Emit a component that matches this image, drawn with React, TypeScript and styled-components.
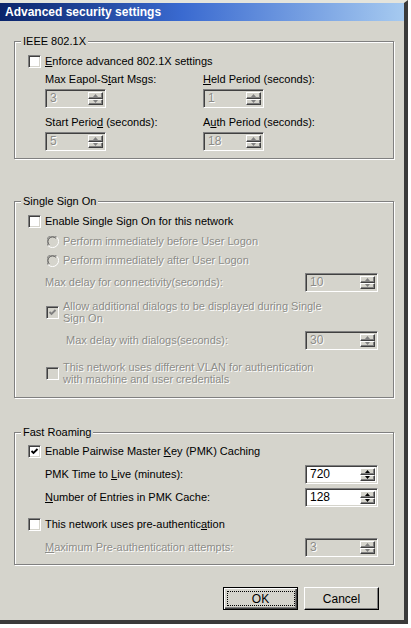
import React from 'react';
import styled, { createGlobalStyle } from 'styled-components';

const FACE = '#d5d4cc';
const SHADOW = '#808080';
const DARK = '#404040';
const GRAYTEXT = '#8c8c88';

const GlobalStyle = createGlobalStyle`
  html, body {
    margin: 0;
    padding: 0;
    background: #ffffff;
  }
  body {
    font-family: "Liberation Sans", Arial, sans-serif;
    font-size: 11px;
    color: #000;
  }
`;

function Check({ checked = false, disabled = false }: { checked?: boolean; disabled?: boolean }) {
  return (
    <CheckBox $disabled={disabled}>
      {checked && (
        <svg width="9" height="9" viewBox="0 0 9 9">
          <polyline
            points="1.5,4 3.5,6 7.5,2"
            fill="none"
            stroke={disabled ? SHADOW : '#000'}
            strokeWidth="1.8"
          />
        </svg>
      )}
    </CheckBox>
  );
}

function Radio() {
  return (
    <RadioDot width="12" height="12" viewBox="0 0 12 12">
      <circle cx="6" cy="6" r="5.5" fill={FACE} />
      <path d="M1.2 9.8 A5.4 5.4 0 0 1 9.8 1.2" fill="none" stroke={SHADOW} strokeWidth="1" />
      <path d="M2.2 8.8 A4.2 4.2 0 0 1 8.8 2.2" fill="none" stroke={DARK} strokeWidth="1" />
      <path d="M9.8 1.2 A5.4 5.4 0 0 1 1.2 9.8" fill="none" stroke="#fff" strokeWidth="1" />
    </RadioDot>
  );
}

function Spin({ value, width, disabled = false }: { value: string; width: number; disabled?: boolean }) {
  const arrow = disabled ? SHADOW : '#000';
  return (
    <SpinBox $w={width} $disabled={disabled}>
      <SpinValue $disabled={disabled}>{value}</SpinValue>
      <SpinButtons>
        <SpinHalf>
          <svg width="5" height="3" viewBox="0 0 5 3">
            <polygon points="2.5,0 5,3 0,3" fill={arrow} />
          </svg>
        </SpinHalf>
        <SpinHalf>
          <svg width="5" height="3" viewBox="0 0 5 3">
            <polygon points="0,0 5,0 2.5,3" fill={arrow} />
          </svg>
        </SpinHalf>
      </SpinButtons>
    </SpinBox>
  );
}

export default function App() {
  return (
    <>
      <GlobalStyle />
      <Window>
        <TitleBar>Advanced security settings</TitleBar>
        <Body>
          <Group $top={14}>
            <Legend>IEEE 802.1X</Legend>
            <Inner $pt={7} $pb={7}>
              <Row $mt={0}>
                <Check />
                <Text><u>E</u>nforce advanced 802.1X settings</Text>
              </Row>
              <FieldGrid>
                <Field>
                  <Text>Max Eapol-S<u>t</u>art Msgs:</Text>
                  <Spin value="3" width={61} disabled />
                </Field>
                <Field>
                  <Text><u>H</u>eld Period (seconds):</Text>
                  <Spin value="1" width={61} disabled />
                </Field>
                <Field>
                  <Text>Start Perio<u>d</u> (seconds):</Text>
                  <Spin value="5" width={61} disabled />
                </Field>
                <Field>
                  <Text>A<u>u</u>th Period (seconds):</Text>
                  <Spin value="18" width={61} disabled />
                </Field>
              </FieldGrid>
            </Inner>
          </Group>

          <Group $top={36}>
            <Legend>Single Sign On</Legend>
            <Inner $pt={7} $pb={12}>
              <Row $mt={0}>
                <Check />
                <Text>Enable Single Sign On for this network</Text>
              </Row>
              <Row $mt={7} $indent={19}>
                <Radio />
                <Text $disabled>Perform immediately before User Logon</Text>
              </Row>
              <Row $mt={6} $indent={19}>
                <Radio />
                <Text $disabled>Perform immediately after User Logon</Text>
              </Row>
              <SpinRow $mt={6} $indent={17}>
                <Text $disabled>Max delay for connectivity(seconds):</Text>
                <Spin value="10" width={73} disabled />
              </SpinRow>
              <Row $mt={8} $indent={18}>
                <Check checked disabled />
                <Text $disabled $lines>
                  Allow additional dialogs to be displayed during Single<br />Sign On
                </Text>
              </Row>
              <SpinRow $mt={7} $indent={38}>
                <Text $disabled>Max delay with dialogs(seconds):</Text>
                <Spin value="30" width={73} disabled />
              </SpinRow>
              <Row $mt={11} $indent={18}>
                <Check disabled />
                <Text $disabled $lines>
                  This network uses different VLAN for authentication<br />with machine and user credentials
                </Text>
              </Row>
            </Inner>
          </Group>

          <Group $top={28}>
            <Legend>Fast Roaming</Legend>
            <Inner $pt={6} $pb={7}>
              <Row $mt={0}>
                <Check checked />
                <Text>Enable Pairwise Master <u>K</u>ey (PMK) Caching</Text>
              </Row>
              <SpinRow $mt={7} $indent={17}>
                <Text>PMK Time to <u>L</u>ive (minutes):</Text>
                <Spin value="720" width={73} />
              </SpinRow>
              <SpinRow $mt={4} $indent={17}>
                <Text><u>N</u>umber of Entries in PMK Cache:</Text>
                <Spin value="128" width={73} />
              </SpinRow>
              <Row $mt={11}>
                <Check />
                <Text>This network uses pre-authentic<u>a</u>tion</Text>
              </Row>
              <SpinRow $mt={7} $indent={17}>
                <Text $disabled><u>M</u>aximum Pre-authentication attempts:</Text>
                <Spin value="3" width={73} disabled />
              </SpinRow>
            </Inner>
          </Group>

          <ButtonBar>
            <Button $default>
              <FocusRing>OK</FocusRing>
            </Button>
            <Button>Cancel</Button>
          </ButtonBar>
        </Body>
      </Window>
    </>
  );
}

const Window = styled.div`
  width: 404px;
  height: 617px;
  background: ${FACE};
  border-top: 3px solid #e4e4dc;
  border-right: 4px solid #3a3a3a;
  border-bottom: 4px solid #3a3a3a;
  display: flex;
  flex-direction: column;
`;

const TitleBar = styled.div`
  height: 18px;
  padding-left: 5px;
  display: flex;
  align-items: center;
  background: linear-gradient(to right, #0a246a 0%, #3a6ad0 45%, #a6caf0 100%);
  color: #fff;
  font-weight: bold;
  font-size: 12px;
`;

const Body = styled.div`
  padding-left: 14px;
  display: flex;
  flex-direction: column;
`;

const Group = styled.fieldset<{ $top: number }>`
  box-sizing: border-box;
  width: 380px;
  margin: ${(p) => p.$top}px 0 0 0;
  padding: 0;
  min-inline-size: 0;
  border: 1px solid ${SHADOW};
  box-shadow: inset 1px 1px 0 #fff, 1px 1px 0 #fff;
`;

const Legend = styled.legend`
  margin-left: 6px;
  padding: 0 2px;
  line-height: 13px;
  background: ${FACE};
`;

const Inner = styled.div<{ $pt: number; $pb: number }>`
  padding: ${(p) => p.$pt}px 15px ${(p) => p.$pb}px 13px;
  display: flex;
  flex-direction: column;
`;

const Row = styled.div<{ $mt: number; $indent?: number }>`
  margin-top: ${(p) => p.$mt}px;
  padding-left: ${(p) => p.$indent ?? 0}px;
  display: flex;
  align-items: center;
  gap: 4px;
  min-height: 13px;
`;

const SpinRow = styled.div<{ $mt: number; $indent: number }>`
  margin-top: ${(p) => p.$mt}px;
  padding-left: ${(p) => p.$indent}px;
  display: flex;
  align-items: center;
  justify-content: space-between;
`;

const FieldGrid = styled.div`
  margin-top: 5px;
  padding-left: 17px;
  display: grid;
  grid-template-columns: 158px 1fr;
  row-gap: 8px;
`;

const Field = styled.div`
  display: flex;
  flex-direction: column;
  align-items: flex-start;
  gap: 3px;
`;

const Text = styled.span<{ $disabled?: boolean; $lines?: boolean }>`
  line-height: ${(p) => (p.$lines ? 12 : 13)}px;
  white-space: nowrap;
  color: ${(p) => (p.$disabled ? GRAYTEXT : '#000')};
  text-shadow: ${(p) => (p.$disabled ? '1px 1px 0 #fff' : 'none')};
  u {
    text-decoration-thickness: 1px;
    text-underline-offset: 1px;
  }
`;

const CheckBox = styled.span<{ $disabled: boolean }>`
  box-sizing: border-box;
  width: 13px;
  height: 13px;
  flex: none;
  display: flex;
  align-items: center;
  justify-content: center;
  background: ${(p) => (p.$disabled ? FACE : '#fff')};
  border: 1px solid;
  border-color: ${SHADOW} #fff #fff ${SHADOW};
  box-shadow: inset 1px 1px 0 ${DARK}, inset -1px -1px 0 ${FACE};
`;

const RadioDot = styled.svg`
  flex: none;
`;

const SpinBox = styled.div<{ $w: number; $disabled: boolean }>`
  box-sizing: border-box;
  width: ${(p) => p.$w}px;
  height: 19px;
  display: flex;
  padding: 2px;
  background: ${(p) => (p.$disabled ? FACE : '#fff')};
  border: 1px solid;
  border-color: ${SHADOW} #fff #fff ${SHADOW};
  box-shadow: inset 1px 1px 0 ${DARK}, inset -1px -1px 0 ${FACE};
`;

const SpinValue = styled.span<{ $disabled: boolean }>`
  flex: 1;
  padding-left: 2px;
  line-height: 13px;
  font-size: 12px;
  color: ${(p) => (p.$disabled ? GRAYTEXT : '#000')};
  text-shadow: ${(p) => (p.$disabled ? '1px 1px 0 #fff' : 'none')};
`;

const SpinButtons = styled.div`
  width: 15px;
  display: flex;
  flex-direction: column;
`;

const SpinHalf = styled.div`
  box-sizing: border-box;
  flex: 1;
  display: flex;
  align-items: center;
  justify-content: center;
  background: ${FACE};
  border: 1px solid;
  border-color: #fff ${DARK} ${DARK} #fff;
  box-shadow: inset -1px -1px 0 ${SHADOW};
`;

const ButtonBar = styled.div`
  box-sizing: border-box;
  width: 380px;
  margin-top: 22px;
  padding-right: 15px;
  display: flex;
  justify-content: flex-end;
  gap: 6px;
`;

const Button = styled.div<{ $default?: boolean }>`
  box-sizing: border-box;
  width: 75px;
  height: 23px;
  display: flex;
  align-items: center;
  justify-content: center;
  background: ${FACE};
  border: 1px solid;
  border-color: ${(p) => (p.$default ? '#000' : '#fff')} #000 #000 ${(p) => (p.$default ? '#000' : '#fff')};
  box-shadow: ${(p) =>
    p.$default
      ? `inset 1px 1px 0 #fff, inset -1px -1px 0 ${DARK}, inset -2px -2px 0 ${SHADOW}`
      : `inset -1px -1px 0 ${SHADOW}`};
  font-size: 12px;
`;

const FocusRing = styled.span`
  box-sizing: border-box;
  width: 68px;
  height: 15px;
  display: flex;
  align-items: center;
  justify-content: center;
  border: 1px dotted #000;
`;
